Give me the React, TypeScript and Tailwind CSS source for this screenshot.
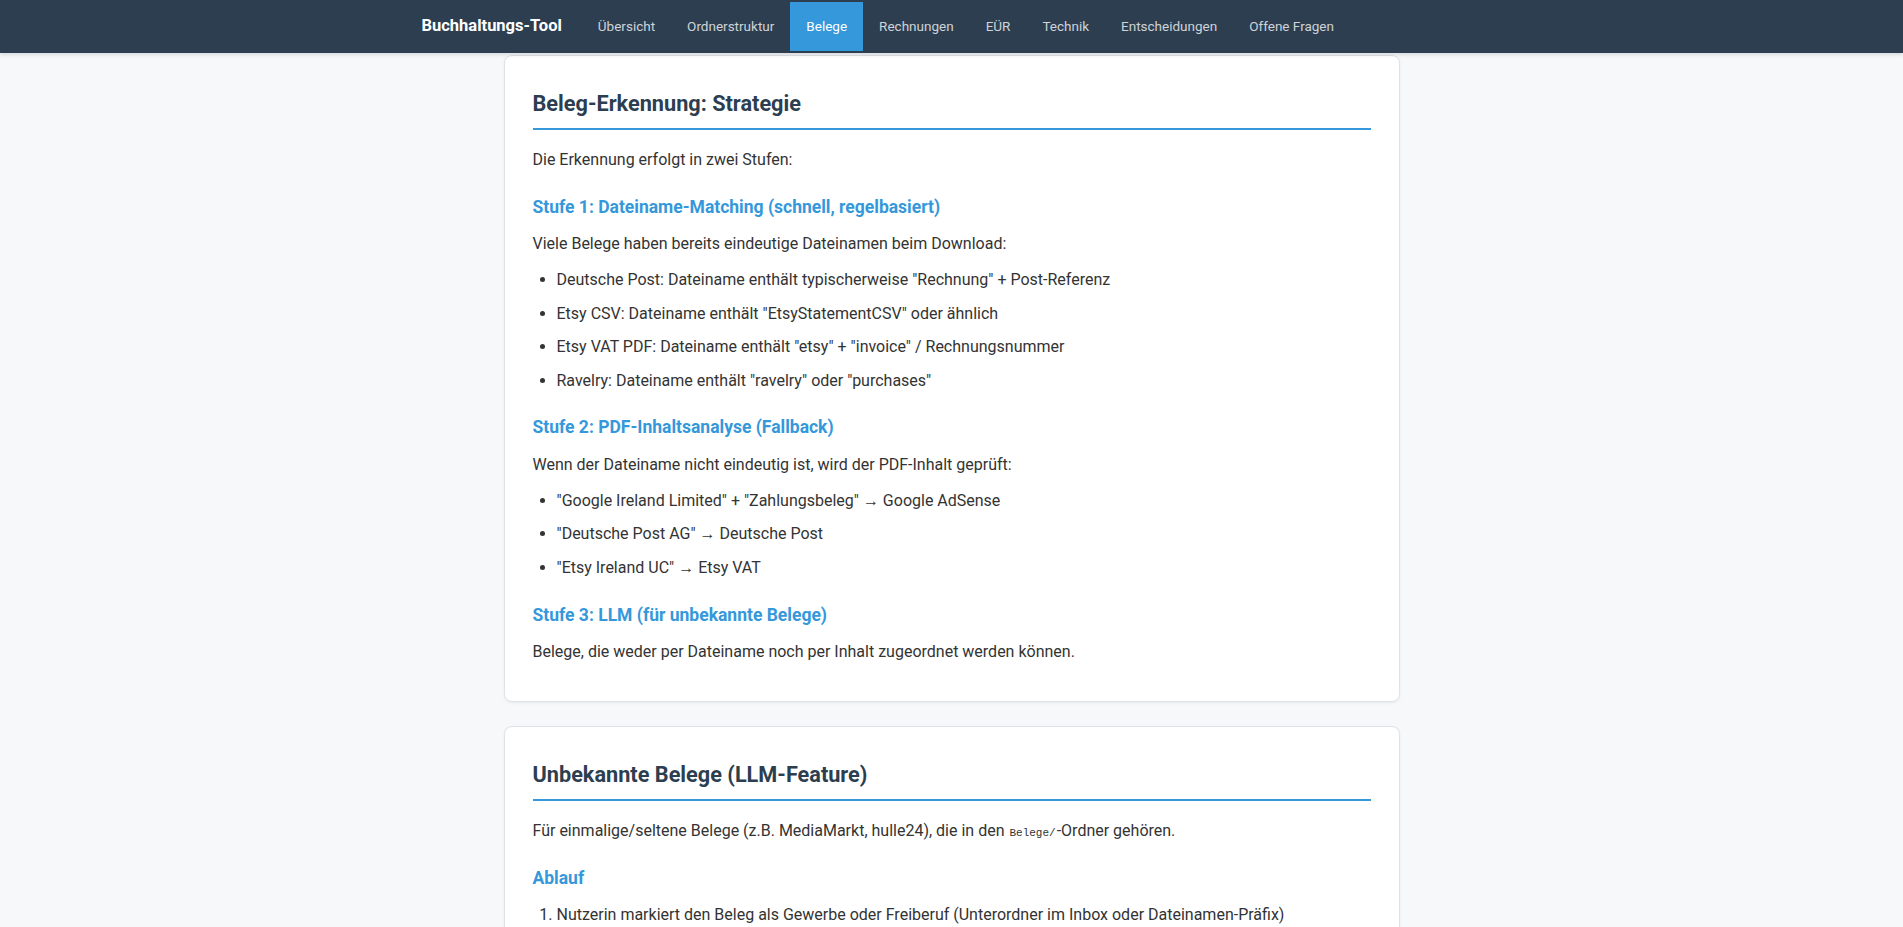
const links = ['Übersicht', 'Ordnerstruktur', 'Belege', 'Rechnungen', 'EÜR', 'Technik', 'Entscheidungen', 'Offene Fragen']

function Card({ title, children }: { title: string; children: React.ReactNode }) {
  return (
    <section className="mb-6 rounded-lg border border-[#dfe3e8] bg-white p-7 shadow-[0_1px_3px_rgba(0,0,0,0.06)]">
      <h2 className="mb-[17px] border-b-2 border-[#3498db] pb-[5px] pt-px text-[21.7px] font-bold leading-[38px] text-[#2c3e50]">{title}</h2>
      {children}
    </section>
  )
}

function H3({ children }: { children: React.ReactNode }) {
  return <h3 className="mb-[10px] mt-5 text-[17.5px] font-bold leading-[28.8px] text-[#3498db]">{children}</h3>
}

export default function App() {
  return (
    <div className="min-h-screen bg-[#f6f8fa] font-['Roboto',sans-serif] text-[16px] leading-[1.6] text-[#333]">
      <nav className="sticky top-0 z-10 h-[53px] bg-[#2c3e50] shadow-[0_2px_4px_rgba(0,0,0,0.12)]">
        <div className="mx-auto flex h-full max-w-[1100px] items-center px-5">
          <span className="mr-5 text-[16.5px] font-bold text-white">Buchhaltungs-Tool</span>
          {links.map((l) => (
            <a
              key={l}
              href="#"
              className={
                l === 'Belege'
                  ? 'flex h-[49px] items-center bg-[#3498db] px-4 text-[13.5px] text-white'
                  : 'flex h-[49px] items-center px-4 text-[13.5px] text-[#ecf0f1]/85'
              }
            >
              {l}
            </a>
          ))}
        </div>
      </nav>

      <main className="mx-auto max-w-[896px] pt-[2px]">
        <Card title="Beleg-Erkennung: Strategie">
          <p className="mb-[10px]">Die Erkennung erfolgt in zwei Stufen:</p>

          <H3>Stufe 1: Dateiname-Matching (schnell, regelbasiert)</H3>
          <p className="mb-[10px]">Viele Belege haben bereits eindeutige Dateinamen beim Download:</p>
          <ul className="mb-[10px] list-disc pl-6">
            <li className="mb-2">Deutsche Post: Dateiname enthält typischerweise "Rechnung" + Post-Referenz</li>
            <li className="mb-2">Etsy CSV: Dateiname enthält "EtsyStatementCSV" oder ähnlich</li>
            <li className="mb-2">Etsy VAT PDF: Dateiname enthält "etsy" + "invoice" / Rechnungsnummer</li>
            <li className="mb-2">Ravelry: Dateiname enthält "ravelry" oder "purchases"</li>
          </ul>

          <H3>Stufe 2: PDF-Inhaltsanalyse (Fallback)</H3>
          <p className="mb-[10px]">Wenn der Dateiname nicht eindeutig ist, wird der PDF-Inhalt geprüft:</p>
          <ul className="mb-[10px] list-disc pl-6">
            <li className="mb-2">"Google Ireland Limited" + "Zahlungsbeleg" → Google AdSense</li>
            <li className="mb-2">"Deutsche Post AG" → Deutsche Post</li>
            <li className="mb-2">"Etsy Ireland UC" → Etsy VAT</li>
          </ul>

          <H3>Stufe 3: LLM (für unbekannte Belege)</H3>
          <p className="mb-[8px]">Belege, die weder per Dateiname noch per Inhalt zugeordnet werden können.</p>
        </Card>

        <Card title="Unbekannte Belege (LLM-Feature)">
          <p className="mb-[10px]">
            Für einmalige/seltene Belege (z.B. MediaMarkt, hulle24), die in den{' '}
            <code className="px-px font-['Liberation_Mono',monospace] text-[11px]">Belege/</code>-Ordner gehören.
          </p>

          <H3>Ablauf</H3>
          <ol className="mb-[10px] list-decimal pl-6">
            <li className="mb-2">Nutzerin markiert den Beleg als Gewerbe oder Freiberuf (Unterordner im Inbox oder Dateinamen-Präfix)</li>
            <li className="mb-2">Das LLM liest den Beleg und schlägt Kategorie, Betrag und Datum vor</li>
          </ol>
        </Card>
      </main>
    </div>
  )
}
